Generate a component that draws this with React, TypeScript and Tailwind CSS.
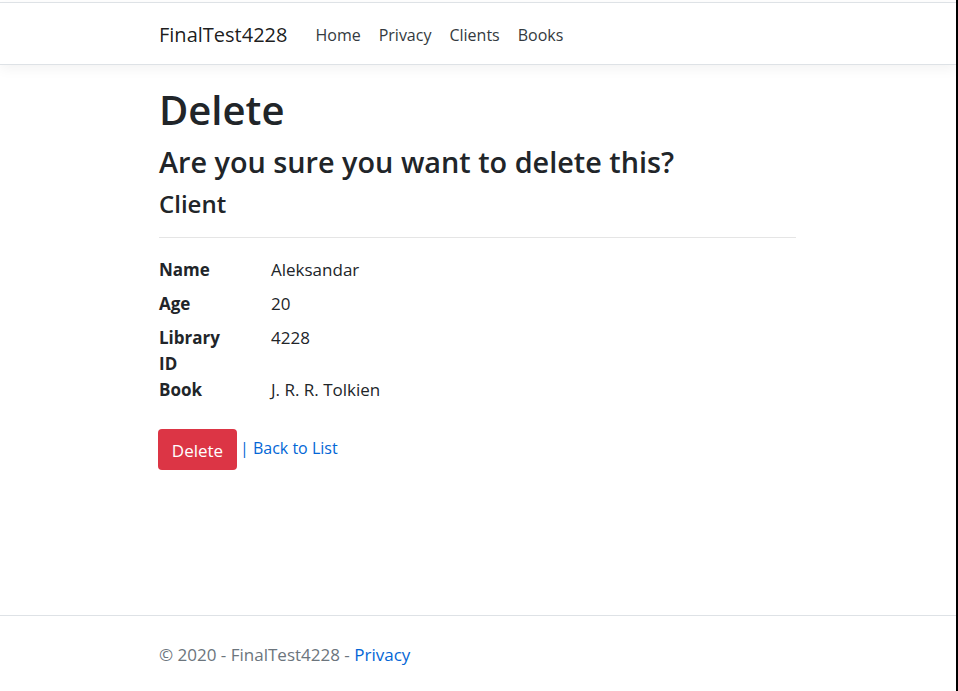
const details: { label: string; value: string }[] = [
  { label: 'Name', value: 'Aleksandar' },
  { label: 'Age', value: '20' },
  { label: 'Library ID', value: '4228' },
  { label: 'Book', value: 'J. R. R. Tolkien' },
];

const navLinks = ['Home', 'Privacy', 'Clients', 'Books'];

export default function App() {
  return (
    <div className="flex h-[691px] overflow-hidden bg-white font-['Open_Sans','Noto_Sans',sans-serif] text-[#212529]">
      <div className="flex flex-1 flex-col">
        <header className="pt-[2px]">
          <nav className="border-y border-[#dee2e6] bg-white shadow-[0_4px_12px_rgba(0,0,0,0.05)]">
            <div className="ml-[159px] flex h-[61px] items-center pt-[3px]">
              <a className="mr-[28px] text-[20px] text-black/90">FinalTest4228</a>
              <ul className="flex gap-[18px] text-[16px] text-[#343a40]">
                {navLinks.map((l) => (
                  <li key={l}>
                    <a>{l}</a>
                  </li>
                ))}
              </ul>
            </div>
          </nav>
        </header>

        <main className="ml-[159px] w-[637px] flex-1 pt-[21px]">
          <h1 className="text-[40px] font-semibold leading-[48px]">Delete</h1>
          <h3 className="mt-[10px] text-[28.8px] font-semibold leading-[36px]">
            Are you sure you want to delete this?
          </h3>
          <div>
            <h4 className="mt-[9px] text-[24px] font-semibold leading-[29px]">Client</h4>
            <hr className="mt-[19px] mb-[19px] border-t border-[#e5e5e5]" />
            <dl className="text-[17px] leading-[26px]">
              {details.map((d) => (
                <div key={d.label} className="flex">
                  <dt className="w-[82px] mr-[30px] font-bold">{d.label}</dt>
                  <dd className="mb-[8px]">{d.value}</dd>
                </div>
              ))}
            </dl>
            <form className="mt-[18px] flex items-start">
              <button
                type="button"
                className="-ml-px h-[41px] w-[79px] rounded-[4px] bg-[#dc3545] pt-[2px] text-[17px] text-white"
              >
                Delete
              </button>
              <span className="ml-[3px] text-[16px] leading-[38px] text-[#0366d6]">
                | <a>Back to List</a>
              </span>
            </form>
          </div>
        </main>

        <footer className="h-[76px] border-t border-[#dee2e6]">
          <div className="ml-[159px] pt-[26px] text-[17px] leading-[26px] text-[#6c757d]">
            © 2020 - FinalTest4228 - <a className="text-[#0366d6]">Privacy</a>
          </div>
        </footer>
      </div>
      <div className="w-[2px] bg-black" />
    </div>
  );
}
